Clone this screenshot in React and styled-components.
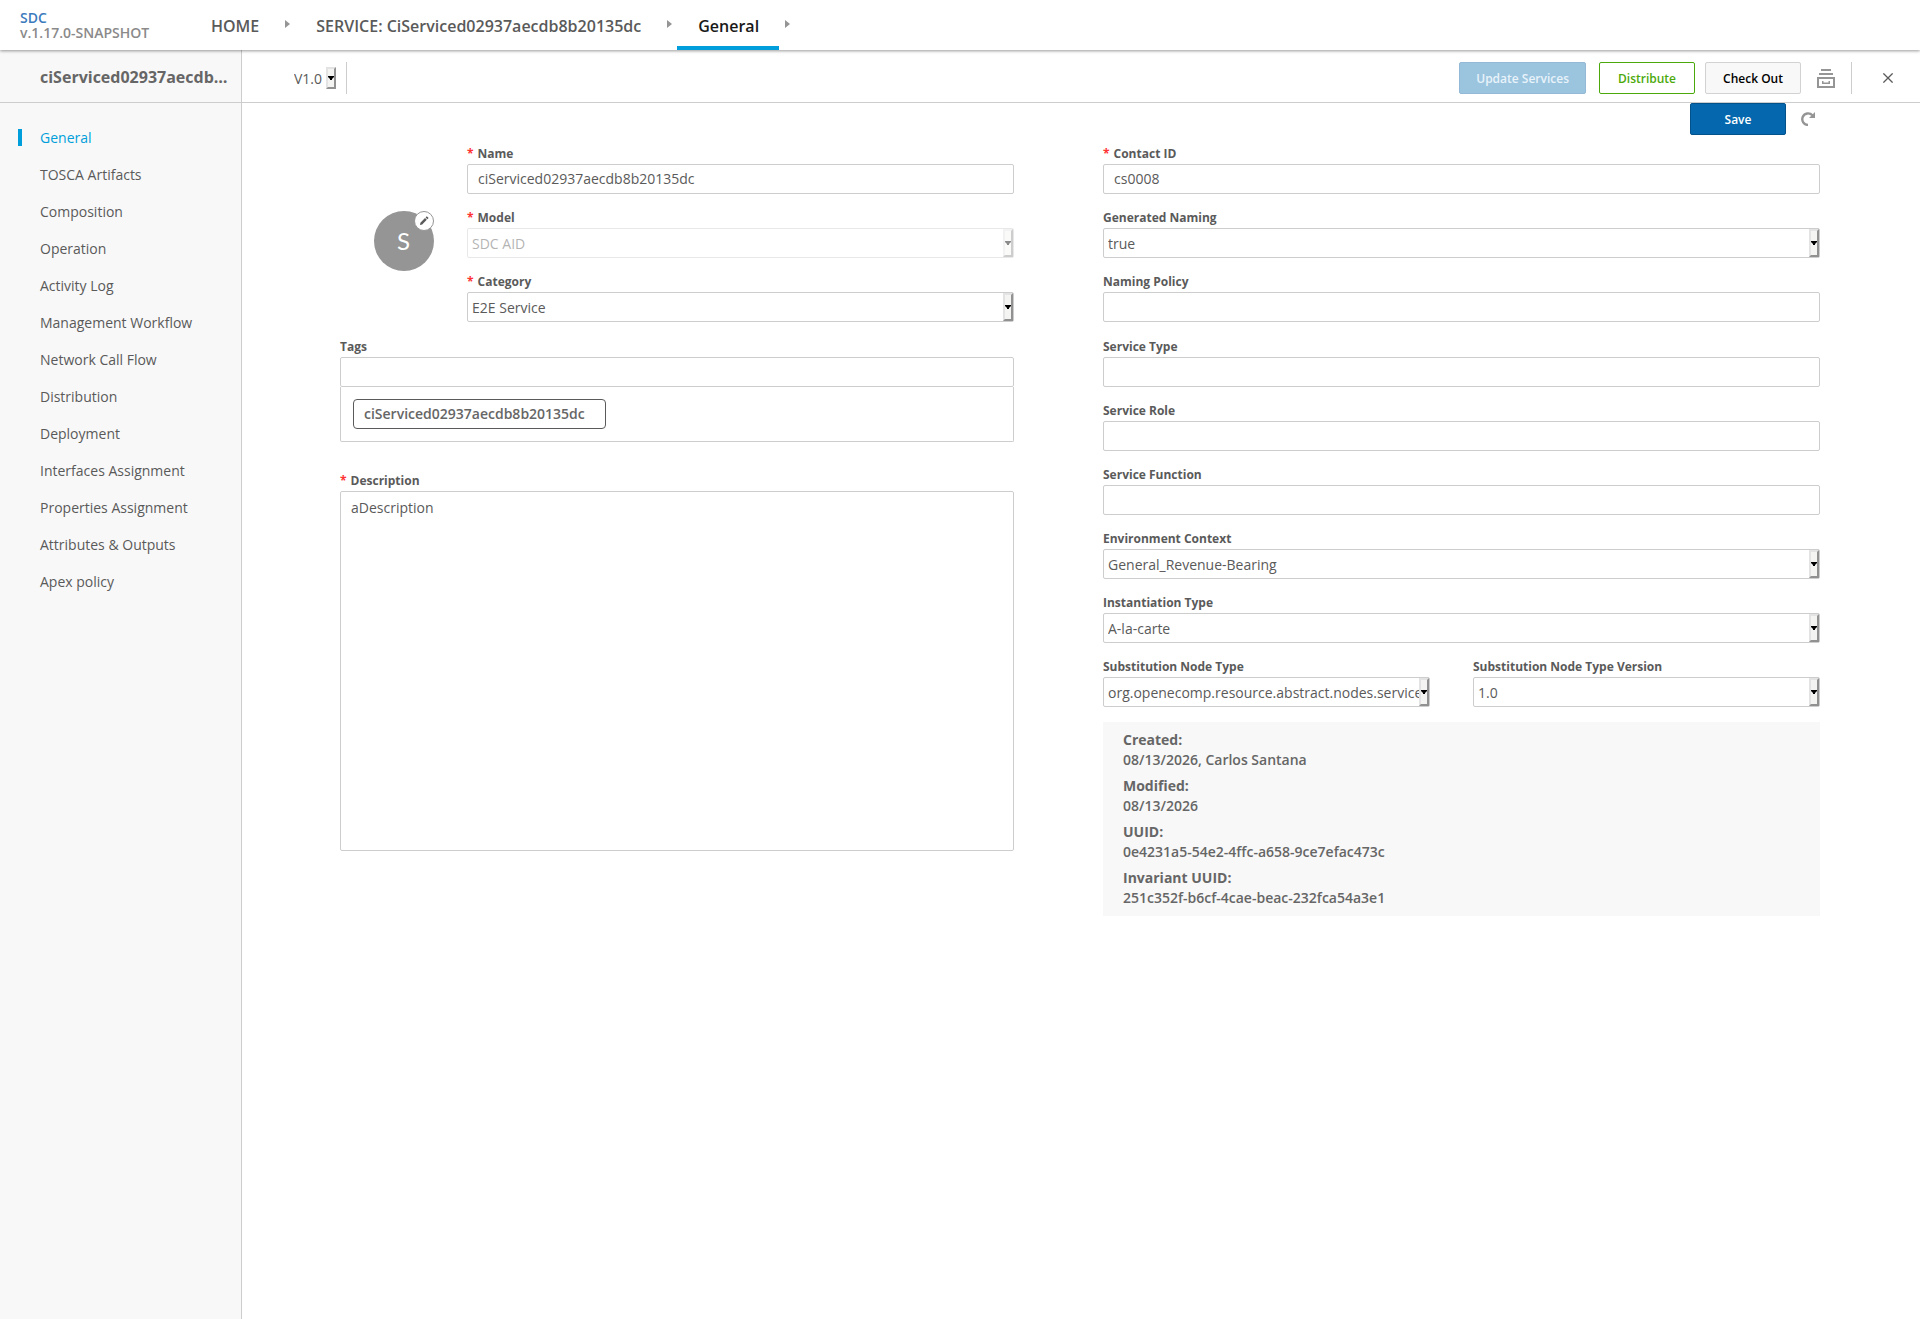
import React, {useState} from "react";
import styled, {createGlobalStyle} from "styled-components";

const GlobalStyle = createGlobalStyle`
    *, *::before, *::after {
        box-sizing: border-box;
    }
    body {
        margin: 0;
        background-color: #fff;
        color: #5a5a5a;
        font-family: "Open Sans", "Liberation Sans", sans-serif;
        font-size: 14px;
        line-height: 20px;
    }
    button, input, select, textarea {
        font: inherit;
        color: inherit;
    }
`

const Page = styled.div`
    display: flex;
    flex-direction: column;
    min-height: 100vh;
`

/* top navigation */
const TopNav = styled.header`
    display: flex;
    position: relative;
    z-index: 1;
    height: 50px;
    padding-left: 20px;
    background-color: #fff;
    box-shadow: 0 1px 3px rgba(0, 0, 0, 0.4);
`
const Brand = styled.div`
    width: 170px;
    padding-top: 10px;
    font-weight: 600;
    line-height: 15px;
    color: #8a8a8a;
`
const BrandLink = styled.a`
    display: block;
    color: #3b7bbd;
    text-decoration: none;
`
const Crumbs = styled.nav`
    display: flex;
`
const Crumb = styled.a`
    display: flex;
    align-items: center;
    padding: 6px 20px 0 21px;
    border-bottom: 4px solid ${({$active}) => $active ? '#009fdb' : 'transparent'};
    color: ${({$active}) => $active ? '#191919' : '#5a5a5a'};
    font-size: 16px;
    font-weight: 600;
    text-decoration: none;
    white-space: nowrap;
`
const CrumbArrow = styled.span`
    align-self: center;
    margin: 0 5px 2px 6px;
    border-left: 5px solid #959595;
    border-top: 4px solid transparent;
    border-bottom: 4px solid transparent;
`

/* sidebar */
const Body = styled.div`
    display: flex;
    flex: 1;
`
const Sidebar = styled.aside`
    flex: 0 0 242px;
    min-width: 0;
    border-right: 1px solid #cdcdcd;
    background-color: #f8f8f8;
`
const SidebarTitle = styled.h1`
    height: 53px;
    margin: 0;
    padding: 0 10px 0 40px;
    border-bottom: 1px solid #cdcdcd;
    overflow: hidden;
    text-overflow: ellipsis;
    white-space: nowrap;
    font-size: 16px;
    font-weight: 700;
    line-height: 54px;
    color: #666;
`
const Menu = styled.ul`
    margin: 0;
    padding: 16px 0;
    list-style: none;
`
const MenuItem = styled.li`
    display: flex;
    align-items: center;
    height: 37px;
    padding-left: 18px;
`
const MenuLink = styled.a`
    padding-left: 18px;
    border-left: 4px solid ${({$active}) => $active ? '#009fdb' : 'transparent'};
    color: ${({$active}) => $active ? '#009fdb' : '#5a5a5a'};
    line-height: 17px;
    text-decoration: none;
`

/* workspace header */
const Main = styled.main`
    flex: 1;
    min-width: 0;
`
const Toolbar = styled.div`
    display: flex;
    align-items: center;
    height: 53px;
    padding: 4px 20px 0 52px;
    border-bottom: 1px solid #cdcdcd;
`
const Separator = styled.span`
    width: 1px;
    height: 32px;
    background-color: #cdcdcd;
`
const VersionBox = styled.div`
    width: 42px;
    height: 22px;
    margin-right: 10px;
`
const Actions = styled.div`
    display: flex;
    align-items: center;
    gap: 13px;
    margin-left: auto;
`
const ButtonPair = styled.div`
    display: flex;
    gap: 10px;
`
const Button = styled.button`
    min-width: 96px;
    height: 32px;
    padding: 2px 16px 0;
    border: 1px solid ${({$border}) => $border};
    border-radius: 2px;
    background-color: ${({$bg}) => $bg};
    color: ${({$color}) => $color};
    font-size: 12px;
    font-weight: 600;
    cursor: pointer;
    &:disabled{
        cursor: default;
    }
`
const IconButton = styled.button`
    display: flex;
    align-items: center;
    justify-content: center;
    width: 24px;
    height: 24px;
    padding: 0;
    border: none;
    background: none;
    cursor: pointer;
`
const CloseArea = styled.div`
    display: flex;
    align-items: center;
    gap: 24px;
`

/* form */
const Form = styled.form`
    padding: 0 100px 40px 98px;
`
const SaveRow = styled.div`
    display: flex;
    justify-content: flex-end;
    align-items: center;
    gap: 10px;
    margin-bottom: 9px;
`
const Columns = styled.div`
    display: grid;
    grid-template-columns: minmax(0, 674fr) minmax(0, 717fr);
    column-gap: 89px;
`
const Column = styled.div`
    display: flex;
    flex-direction: column;
    gap: 15px;
    min-width: 0;
`
const Fields = styled.div`
    display: flex;
    flex-direction: column;
    gap: 14px;
    min-width: 0;
`
const Identity = styled.div`
    display: grid;
    grid-template-columns: 127px minmax(0, 1fr);
`
const AvatarCell = styled.div`
    display: flex;
    justify-content: center;
    padding-top: 67px;
`
const Avatar = styled.div`
    display: flex;
    align-items: center;
    justify-content: center;
    position: relative;
    width: 60px;
    height: 60px;
    border-radius: 50%;
    background-color: #959595;
    color: #fff;
    font-family: Lato, sans-serif;
    font-size: 24px;
`
const EditBadge = styled.button`
    display: flex;
    align-items: center;
    justify-content: center;
    position: absolute;
    top: 0;
    right: 0;
    width: 20px;
    height: 20px;
    padding: 0;
    border: 1px solid #959595;
    border-radius: 50%;
    background-color: #fff;
    cursor: pointer;
`
const FieldBox = styled.div`
    min-width: 0;
`
const Label = styled.label`
    display: block;
    font-size: 12px;
    font-weight: 700;
    ${({$required}) => $required && `
        &::before{
            content: "*";
            margin-right: 4px;
            color: #f33;
        }
    `}
`
const TextInput = styled.input`
    display: block;
    width: 100%;
    height: 30px;
    padding: 0 10px 2px;
    border: 1px solid #cdcdcd;
    border-radius: 2px;
    background-color: #fff;
`
const TextArea = styled.textarea`
    display: block;
    width: 100%;
    height: 360px;
    padding: 6px 10px;
    border: 1px solid #cdcdcd;
    border-radius: 2px;
    resize: none;
`
const SelectBox = styled.div`
    position: relative;
    height: ${({$plain}) => $plain ? '22px' : '30px'};
    opacity: ${({$disabled}) => $disabled ? 0.45 : 1};
`
const NativeSelect = styled.select`
    appearance: none;
    display: block;
    width: 100%;
    height: 100%;
    padding: ${({$plain}) => $plain ? '2px 10px 0 0' : '2px 10px 0 4px'};
    border: ${({$plain}) => $plain ? 'none' : '1px solid #cdcdcd'};
    border-radius: 2px;
    background-color: #fff;
    &:disabled{
        color: inherit;
        opacity: 1;
    }
`
const SelectArrow = styled.span`
    display: flex;
    align-items: center;
    justify-content: center;
    position: absolute;
    top: ${({$plain}) => $plain ? '0' : '1px'};
    right: ${({$plain}) => $plain ? '0' : '1px'};
    bottom: ${({$plain}) => $plain ? '0' : '1px'};
    width: 10px;
    border: 2px solid;
    border-color: #e3e3e3 #919191 #919191 #e3e3e3;
    background-color: #f4f4f3;
    pointer-events: none;
`
const TagPanel = styled.div`
    padding: 12px;
    border: 1px solid #cdcdcd;
    border-top: none;
    border-radius: 0 0 2px 2px;
`
const Tag = styled.span`
    display: inline-flex;
    align-items: center;
    height: 30px;
    padding: 0 20px 0 10px;
    border: 1px solid #5a5a5a;
    border-radius: 4px;
    font-weight: 600;
    color: #666;
    vertical-align: top;
`
const DescriptionField = styled(FieldBox)`
    margin-top: 14px;
`
const NodeTypes = styled.div`
    display: grid;
    grid-template-columns: minmax(0, 327fr) minmax(0, 347fr);
    column-gap: 43px;
`
const Info = styled.dl`
    display: flex;
    flex-direction: column;
    gap: 6px;
    margin: 0;
    padding: 8px 20px;
    background-color: #f8f8f8;
    color: #666;
    font-weight: 600;
`
const InfoTerm = styled.dt`
    font-weight: 700;
`
const InfoValue = styled.dd`
    margin: 0;
`

const menuItems = [
    'General', 'TOSCA Artifacts', 'Composition', 'Operation', 'Activity Log',
    'Management Workflow', 'Network Call Flow', 'Distribution', 'Deployment',
    'Interfaces Assignment', 'Properties Assignment', 'Attributes & Outputs', 'Apex policy',
]

const serviceInfo = [
    {term: 'Created:', value: '08/13/2026, Carlos Santana'},
    {term: 'Modified:', value: '08/13/2026'},
    {term: 'UUID:', value: '0e4231a5-54e2-4ffc-a658-9ce7efac473c'},
    {term: 'Invariant UUID:', value: '251c352f-b6cf-4cae-beac-232fca54a3e1'},
]

const ArchiveIcon = () => (
    <svg width="18" height="19" viewBox="0 0 18 19" fill="none" stroke="#959595" strokeWidth="2">
        <path d="M4 1h10M2 5h14M1 9h16v9H1z"/>
        <path d="M5.75 12v2.25h6.5V12" strokeWidth="1.5"/>
    </svg>
)

const CloseIcon = () => (
    <svg width="10" height="10" viewBox="0 0 10 10" fill="none" stroke="#5a5a5a" strokeWidth="1.3">
        <path d="M0.4 0.4l9.2 9.2M9.6 0.4L0.4 9.6"/>
    </svg>
)

const RevertIcon = () => (
    <svg width="14" height="14" viewBox="0 0 14 14">
        <path d="M7 13A5.8 5.8 0 1 1 11.4 3.3" fill="none" stroke="#959595" strokeWidth="2.4"/>
        <path d="M14 0v6H8z" fill="#959595"/>
    </svg>
)

const PencilIcon = () => (
    <svg width="10" height="10" viewBox="0 0 10 10" fill="#5a5a5a">
        <path d="M1 9l.4-2.3L6 2l1.8 1.8-4.6 4.7zM6.6 1.4L7.8.3l1.8 1.8-1.2 1.1z"/>
    </svg>
)

const Select = ({id, value, plain, disabled, label}) => (
    <SelectBox $plain={plain} $disabled={disabled}>
        <NativeSelect id={id} $plain={plain} disabled={disabled} aria-label={label}>
            <option>{value}</option>
        </NativeSelect>
        <SelectArrow $plain={plain}>
            <svg width="6" height="4" viewBox="0 0 6 4"><path d="M0 0h6v1L4 3v1H2V3L0 1z"/></svg>
        </SelectArrow>
    </SelectBox>
)

const TextField = ({id, label, value = '', required}) => {
    const [text, setText] = useState(value)
    return (
        <FieldBox>
            <Label htmlFor={id} $required={required}>{label}</Label>
            <TextInput id={id} type="text" value={text} onChange={e => setText(e.target.value)}/>
        </FieldBox>
    )
}

const SelectField = ({id, label, value, required, disabled}) => (
    <FieldBox>
        <Label htmlFor={id} $required={required}>{label}</Label>
        <Select id={id} value={value} disabled={disabled}/>
    </FieldBox>
)

const Header = () => (
    <TopNav>
        <Brand>
            <BrandLink href="#home">SDC</BrandLink>
            v.1.17.0-SNAPSHOT
        </Brand>
        <Crumbs>
            <Crumb href="#home">HOME</Crumb>
            <CrumbArrow/>
            <Crumb href="#service">SERVICE: CiServiced02937aecdb8b20135dc</Crumb>
            <CrumbArrow/>
            <Crumb href="#general" $active>General</Crumb>
            <CrumbArrow/>
        </Crumbs>
    </TopNav>
)

const SideMenu = () => (
    <Sidebar>
        <SidebarTitle>ciServiced02937aecdb8b20135dc</SidebarTitle>
        <Menu>
            {menuItems.map((item, i) => (
                <MenuItem key={item}>
                    <MenuLink href="#general" $active={i === 0}>{item}</MenuLink>
                </MenuItem>
            ))}
        </Menu>
    </Sidebar>
)

const WorkspaceToolbar = () => (
    <Toolbar>
        <VersionBox><Select plain value="V1.0" label="Version"/></VersionBox>
        <Separator/>
        <Actions>
            <Button type="button" disabled $bg="#9bc4de" $border="#93b9d6" $color="#e8f3fa">Update Services</Button>
            <ButtonPair>
                <Button type="button" $bg="#fff" $border="#4ca90c" $color="#4ca90c">Distribute</Button>
                <Button type="button" $bg="#f8f8f8" $border="#d2d2d2" $color="#000">Check Out</Button>
            </ButtonPair>
            <IconButton type="button" aria-label="Archive"><ArchiveIcon/></IconButton>
            <CloseArea>
                <Separator/>
                <IconButton type="button" aria-label="Close"><CloseIcon/></IconButton>
            </CloseArea>
        </Actions>
    </Toolbar>
)

const GeneralForm = () => (
    <Form onSubmit={e => e.preventDefault()}>
        <SaveRow>
            <Button type="submit" $bg="#0568ae" $border="#04528b" $color="#fff">Save</Button>
            <IconButton type="reset" aria-label="Revert"><RevertIcon/></IconButton>
        </SaveRow>
        <Columns>
            <Column>
                <Identity>
                    <AvatarCell>
                        <Avatar>
                            S
                            <EditBadge type="button" aria-label="Change icon"><PencilIcon/></EditBadge>
                        </Avatar>
                    </AvatarCell>
                    <Fields>
                        <TextField id="name" label="Name" value="ciServiced02937aecdb8b20135dc" required/>
                        <SelectField id="model" label="Model" value="SDC AID" required disabled/>
                        <SelectField id="category" label="Category" value="E2E Service" required/>
                    </Fields>
                </Identity>
                <FieldBox>
                    <TextField id="tags" label="Tags"/>
                    <TagPanel><Tag>ciServiced02937aecdb8b20135dc</Tag></TagPanel>
                </FieldBox>
                <DescriptionField>
                    <Label htmlFor="description" $required>Description</Label>
                    <TextArea id="description" defaultValue="aDescription"/>
                </DescriptionField>
            </Column>
            <Column>
                <Fields>
                    <TextField id="contactId" label="Contact ID" value="cs0008" required/>
                    <SelectField id="generatedNaming" label="Generated Naming" value="true"/>
                    <TextField id="namingPolicy" label="Naming Policy"/>
                </Fields>
                <Fields>
                    <TextField id="serviceType" label="Service Type"/>
                    <TextField id="serviceRole" label="Service Role"/>
                    <TextField id="serviceFunction" label="Service Function"/>
                    <SelectField id="environmentContext" label="Environment Context" value="General_Revenue-Bearing"/>
                    <SelectField id="instantiationType" label="Instantiation Type" value="A-la-carte"/>
                    <NodeTypes>
                        <SelectField id="nodeType" label="Substitution Node Type" value="org.openecomp.resource.abstract.nodes.service"/>
                        <SelectField id="nodeTypeVersion" label="Substitution Node Type Version" value="1.0"/>
                    </NodeTypes>
                </Fields>
                <Info>
                    {serviceInfo.map(({term, value}) => (
                        <div key={term}>
                            <InfoTerm>{term}</InfoTerm>
                            <InfoValue>{value}</InfoValue>
                        </div>
                    ))}
                </Info>
            </Column>
        </Columns>
    </Form>
)

const App = () => (
    <Page>
        <GlobalStyle/>
        <Header/>
        <Body>
            <SideMenu/>
            <Main>
                <WorkspaceToolbar/>
                <GeneralForm/>
            </Main>
        </Body>
    </Page>
)

export default App
